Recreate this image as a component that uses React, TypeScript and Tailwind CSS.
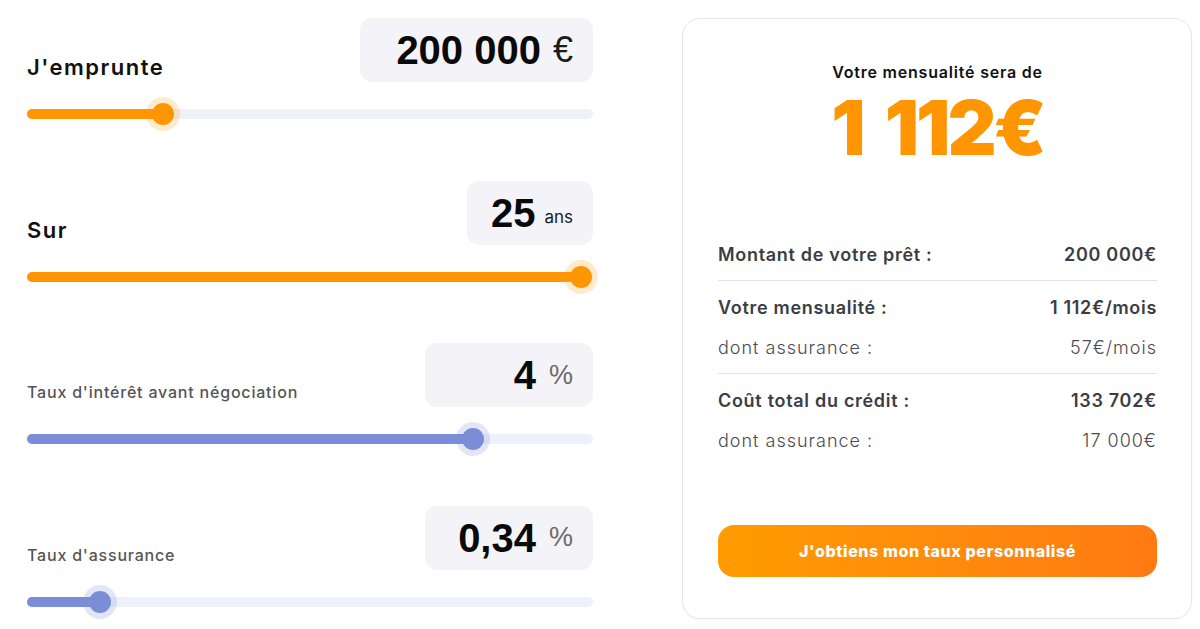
import React from "react";

type SliderProps = { pct: number; color: "orange" | "blue" };

function Slider({ pct, color }: SliderProps) {
  const fill = color === "orange" ? "bg-[#ff9500]" : "bg-[#7b8dd6]";
  const ring =
    color === "orange"
      ? "bg-[#ff9500] shadow-[0_0_0_6px_rgba(255,149,0,0.2)]"
      : "bg-[#7b8dd6] shadow-[0_0_0_6px_rgba(123,141,214,0.22)]";
  return (
    <div className="relative mt-[21px] flex h-[22px] items-center">
      <div className="relative h-[10px] w-full rounded-full bg-[#eff1fa]">
        <div className={`absolute left-0 top-0 h-full rounded-full ${fill}`} style={{ width: `${pct}%` }} />
      </div>
      <div
        className={`absolute top-0 h-[22px] w-[22px] -translate-x-1/2 rounded-full ${ring}`}
        style={{ left: `${pct}%` }}
      />
    </div>
  );
}

type BlockProps = {
  label: string;
  labelClass: string;
  boxWidth: string;
  value: string;
  unit: React.ReactNode;
  pct: number;
  color: "orange" | "blue";
};

function Block({ label, labelClass, boxWidth, value, unit, pct, color }: BlockProps) {
  return (
    <div>
      <div className="flex h-[64px] items-end justify-between">
        <div className={labelClass}>{label}</div>
        <div
          className={`flex h-[64px] items-center justify-end rounded-[12px] bg-[#f4f4f8] pr-[20px] ${boxWidth}`}
        >
          <span className="font-['Liberation_Sans',Arial,sans-serif] text-[40px] font-bold leading-none text-[#0a0a0a]">
            {value}
          </span>
          {unit}
        </div>
      </div>
      <Slider pct={pct} color={color} />
    </div>
  );
}

function Row({
  label,
  value,
  bold,
}: {
  label: string;
  value: string;
  bold?: boolean;
}) {
  const cls = bold
    ? "text-[18px] font-semibold tracking-[0.7px] text-[#3b3d44]"
    : "text-[18px] font-light tracking-[1px] text-[#4a4b52]";
  return (
    <div className="flex h-[40px] items-center justify-between">
      <span className={cls}>{label}</span>
      <span className={cls}>{value}</span>
    </div>
  );
}

export default function App() {
  const bigLabel =
    "mb-[4px] text-[22px] font-semibold leading-none text-[#111111] tracking-[1.5px]";
  const smallLabel =
    "mb-[7px] text-[16px] font-medium leading-none text-[#555555] tracking-[0.8px]";
  return (
    <div className="flex h-[629px] w-[1200px] bg-white font-['Inter','Noto_Sans',sans-serif]">
      <div className="flex w-[593px] flex-col gap-[55.5px] pl-[27px] pt-[18px]">
        <Block
          label="J'emprunte"
          labelClass={bigLabel}
          boxWidth="w-[233px]"
          value="200 000"
          unit={
            <span className="ml-[12px] font-['Liberation_Sans',Arial,sans-serif] text-[36px] leading-none text-[#1a1a1a]">
              €
            </span>
          }
          pct={24}
          color="orange"
        />
        <Block
          label="Sur"
          labelClass={bigLabel}
          boxWidth="w-[126px]"
          value="25"
          unit={
            <span className="ml-[9px] mt-[10px] text-[17px] leading-none text-[#1a1a1a]">ans</span>
          }
          pct={97.9}
          color="orange"
        />
        <Block
          label="Taux d'intérêt avant négociation"
          labelClass={smallLabel}
          boxWidth="w-[168px]"
          value="4"
          unit={
            <span className="ml-[13px] font-['Liberation_Sans',Arial,sans-serif] text-[27px] leading-none text-[#6b6b6b]">
              %
            </span>
          }
          pct={78.8}
          color="blue"
        />
        <Block
          label="Taux d'assurance"
          labelClass={smallLabel}
          boxWidth="w-[168px]"
          value="0,34"
          unit={
            <span className="ml-[13px] font-['Liberation_Sans',Arial,sans-serif] text-[27px] leading-none text-[#6b6b6b]">
              %
            </span>
          }
          pct={12.9}
          color="blue"
        />
      </div>

      <div className="ml-[89px] mt-[18px] flex h-[601px] w-[510px] flex-col rounded-[18px] border border-[#e6e6e6] pl-[35px] pr-[34px] shadow-[0_1px_3px_rgba(0,0,0,0.04)]">
        <div className="mt-[46px] text-center text-[16px] font-semibold leading-[14px] tracking-[0.8px] text-[#111111]">
          Votre mensualité sera de
        </div>
        <div className="mt-[2px] text-center text-[76px] font-black leading-[92px] tracking-[-3px] text-[#ff9500] [word-spacing:10px]">
          1 112€
        </div>
        <div className="mt-[61px]">
          <Row label="Montant de votre prêt :" value="200 000€" bold />
          <div className="my-[6px] h-px bg-[#e3e3e3]" />
          <Row label="Votre mensualité :" value="1 112€/mois" bold />
          <Row label="dont assurance :" value="57€/mois" />
          <div className="my-[6px] h-px bg-[#e3e3e3]" />
          <Row label="Coût total du crédit :" value="133 702€" bold />
          <Row label="dont assurance :" value="17 000€" />
        </div>
        <button className="mt-[65px] flex h-[52px] w-full items-center justify-center rounded-[16px] bg-gradient-to-r from-[#ff9c00] to-[#ff7a12] text-[16px] font-extrabold tracking-[0.6px] text-white">
          J'obtiens mon taux personnalisé
        </button>
      </div>
    </div>
  );
}
